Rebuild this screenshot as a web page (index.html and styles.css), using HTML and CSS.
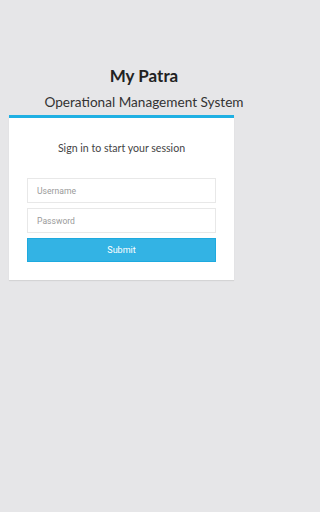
FILE: index.html
```html
<!DOCTYPE html>
<html>
<head>
<meta charset="utf-8">
<link rel="stylesheet" href="styles.css">
</head>
<body>
<div class="page">
  <div class="logo">
    <div class="title">My Patra</div>
    <div class="subtitle">Operational Management System</div>
  </div>
  <div class="card">
    <p class="msg">Sign in to start your session</p>
    <form class="form">
      <input class="field" type="text" placeholder="Username">
      <input class="field" type="password" placeholder="Password">
      <button class="submit" type="button">Submit</button>
    </form>
  </div>
</div>
</body>
</html>
```

FILE: styles.css
```css
html, body {
  margin: 0;
  padding: 0;
  background: #e6e6e8;
  height: 100%;
}
.page {
  width: 288px;
  height: 512px;
  padding-top: 66px;
  box-sizing: border-box;
}
.logo {
  text-align: center;
  color: #222;
  font-family: "Lato", "Open Sans", sans-serif;
}
.title {
  font-size: 17px;
  font-weight: 700;
  line-height: 20px;
}
.subtitle {
  font-size: 13.6px;
  line-height: 18px;
  margin-top: 7px;
  color: #333;
}
.card {
  margin: 4px 0 0 9px;
  width: 225px;
  background: #fff;
  border-top: 3px solid #1fb0e3;
  box-shadow: 0 1px 1px rgba(0,0,0,0.08);
  padding: 23px 18px 18px;
  box-sizing: border-box;
}
.msg {
  margin: 0 0 23px;
  text-align: center;
  font-family: "Lato", "Open Sans", sans-serif;
  font-size: 10.6px;
  line-height: 14px;
  color: #444;
}
.form {
  display: flex;
  flex-direction: column;
  gap: 5px;
}
.field {
  height: 25px;
  border: 1px solid #e8e8e8;
  padding: 0 9px;
  font-family: "Roboto", sans-serif;
  font-size: 8.6px;
  color: #555;
  outline: none;
  box-sizing: border-box;
  margin: 0;
  width: 100%;
}
.field::placeholder {
  color: #9a9a9a;
}
.submit {
  height: 24px;
  background: #33b3e4;
  border: 1px solid #1eaadf;
  color: #fff;
  font-family: "Roboto", sans-serif;
  font-size: 9px;
  margin: 0;
  padding: 0;
  width: 100%;
  box-sizing: border-box;
}
```
